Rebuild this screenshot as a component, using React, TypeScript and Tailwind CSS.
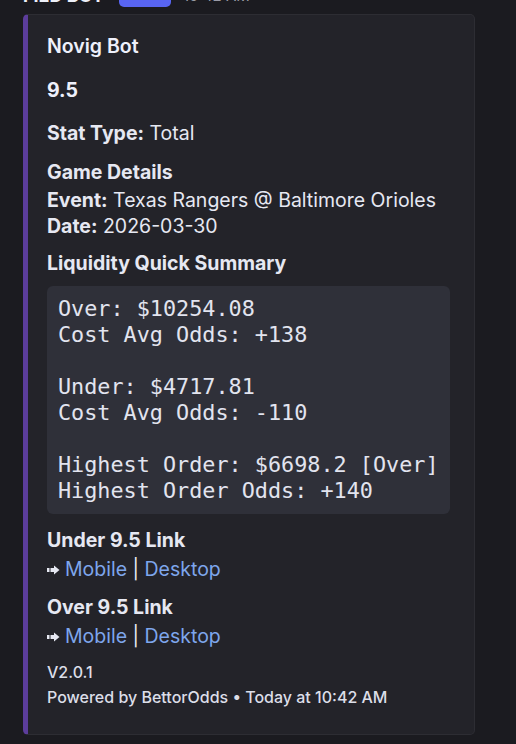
import React from "react";

const Arrow = () => (
  <svg width="13" height="10" viewBox="0 0 13 10" className="inline-block mr-[5px] align-middle relative -top-[1px]">
    <rect x="0" y="3" width="2.5" height="4" fill="#e6e8f2" />
    <rect x="3.5" y="3" width="4" height="4" fill="#e6e8f2" />
    <path d="M7 0.5 L12.5 5 L7 9.5 Z" fill="#e6e8f2" />
  </svg>
);

const LinkRow = () => (
  <div className="mt-[3px] leading-[26px] text-[19.5px] text-[#e6e8f2]">
    <Arrow />
    <span className="text-[#7ea6ec]">Mobile</span>
    <span className="text-[#e6e8f2]"> | </span>
    <span className="text-[#7ea6ec]">Desktop</span>
  </div>
);

export default function App() {
  return (
    <div
      className="w-[516px] h-[744px] overflow-hidden bg-[#1b1b20]"
      style={{ fontFamily: "Inter, 'Noto Sans', sans-serif" }}
    >
      <div className="flex items-center h-[22px] -mt-[15px] pl-[23px]">
        <span className="text-[18px] leading-[22px] font-bold text-[#eef0f8] w-[96px]">FIED BOT</span>
        <span className="h-[22px] w-[52px] rounded-[5px] bg-[#5865f2] text-white text-[13px] font-bold flex items-center justify-center">APP</span>
        <span className="ml-[12px] text-[15px] leading-[22px] text-[#9a9ba6]">10:42 AM</span>
      </div>
      <div className="mt-[7px] ml-[23px] w-[452px] h-[721px] rounded-[5px] border border-[#2d2d33] border-l-[5px] border-l-[#5c3d9b] bg-[#232329] pl-[19px] pt-[19px] text-[#e6e8f2]">
        <div className="text-[19.5px] leading-[24px] font-semibold text-[#eef0fb]">Novig Bot</div>
        <div className="mt-[20px] text-[19.5px] leading-[24px] font-bold text-[#eef0fb]">9.5</div>
        <div className="mt-[18px] text-[19.5px] leading-[26px]">
          <span className="font-bold">Stat Type:</span> Total
        </div>
        <div className="mt-[13px] text-[19.5px] leading-[26px] font-bold">Game Details</div>
        <div className="mt-[2px] text-[19.5px] leading-[26px]">
          <span className="font-bold">Event:</span> Texas Rangers @ Baltimore Orioles
        </div>
        <div className="text-[19.5px] leading-[26px]">
          <span className="font-bold">Date:</span> 2026-03-30
        </div>
        <div className="mt-[11px] text-[19.5px] leading-[26px] font-bold">Liquidity Quick Summary</div>
        <div
          className="mt-[10px] w-[403px] rounded-[6px] bg-[#2f3039] pl-[11px] py-[10px] text-[21.8px] leading-[26px] text-[#e2e4ef] whitespace-pre"
          style={{ fontFamily: "'DejaVu Sans Mono', 'Liberation Mono', monospace" }}
        >
          {"Over: $10254.08\nCost Avg Odds: +138\n\nUnder: $4717.81\nCost Avg Odds: -110\n\nHighest Order: $6698.2 [Over]\nHighest Order Odds: +140"}
        </div>
        <div className="mt-[13px] text-[19.5px] leading-[26px] font-bold">Under 9.5 Link</div>
        <LinkRow />
        <div className="mt-[12px] text-[19.5px] leading-[26px] font-bold">Over 9.5 Link</div>
        <LinkRow />
        <div className="mt-[12px] text-[16px] leading-[22px] font-medium text-[#dcdee8]">V2.0.1</div>
        <div className="mt-[3px] text-[16px] leading-[22px] font-medium text-[#dcdee8]">
          Powered by BettorOdds • Today at 10:42 AM
        </div>
      </div>
    </div>
  );
}
